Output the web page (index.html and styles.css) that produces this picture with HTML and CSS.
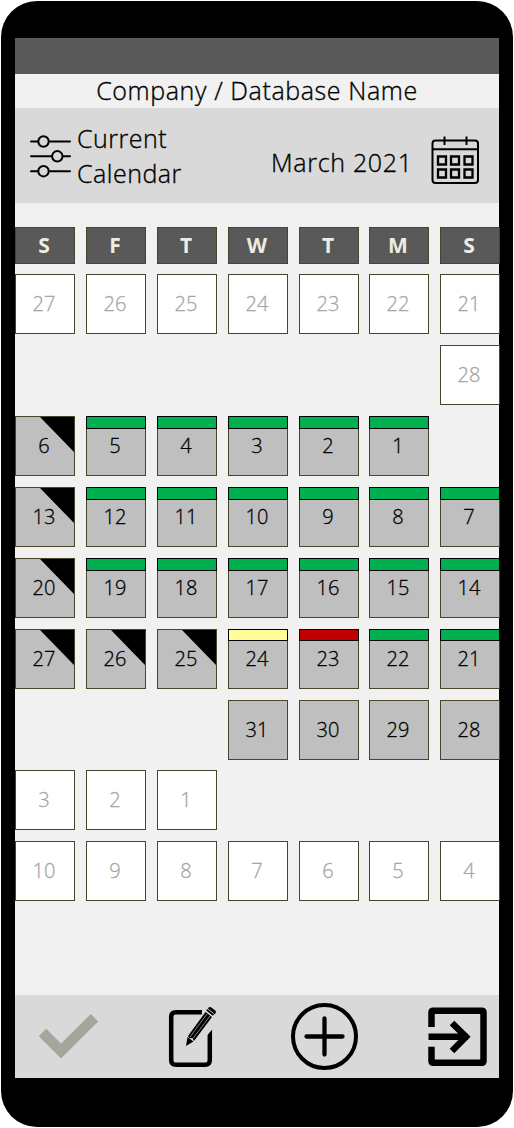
FILE: index.html
```html
<!DOCTYPE html>
<html lang="en">
<head>
<meta charset="utf-8">
<title>March 2021</title>
<link rel="stylesheet" href="styles.css">
</head>
<body>
<div class="phone">
  <main class="screen">
    <div class="status"></div>
    <h1 class="company"><span>Company / Database Name</span></h1>
    <header class="toolbar">
      <svg class="filters" width="42" height="44" viewBox="0 0 42 44" fill="none" stroke="#000" stroke-width="2" stroke-linecap="round">
        <path d="M1 7.500H8M20 7.500H40M1 22.300H21.500M33.500 22.300H40M1 37.200H8M20 37.200H40"/>
        <circle cx="13.500" cy="7.500" r="5.200"/><circle cx="27.300" cy="22.300" r="5.200"/><circle cx="13.500" cy="37.200" r="5.200"/>
      </svg>
      <div class="calendar-name"><span>Current</span><span>Calendar</span></div>
      <div class="month"><span>March 2021</span></div>
      <svg class="calendar-icon" width="49" height="49" viewBox="0 0 49 49" fill="none" stroke="#000" stroke-width="2">
        <rect x="1.500" y="4.500" width="45.500" height="42.500" rx="3"/>
        <path d="M1.500 13.300H47M13.500 .5V9M35.500 .5V9"/>
        <path d="M7 20.500h8v8H7zM20 20.500h8v8h-8zM33.500 20.500h8v8h-8zM7 33.500h8v8H7zM20 33.500h8v8h-8zM33.500 33.500h8v8h-8z" stroke-width="2.300"/>
      </svg>
    </header>
    <section class="calendar" id="calendar"></section>
    <footer class="actions">
      <svg width="484" height="83" viewBox="0 0 484 83">
        <path d="M27.500 37.500L46 56L79.500 22.800" fill="none" stroke="#a6a59b" stroke-width="10.500"/>
        <path d="M187 17.300H161Q156.200 17.300 156.200 22V65Q156.200 69.800 161 69.800H190Q194.800 69.800 194.800 65V35" fill="none" stroke="#000" stroke-width="4.500"/>
        <path d="M187 12L202 12V29L189 44Z" fill="#d9d9d9"/>
        <path d="M171 51L172.500 42L178.500 46.500Z" fill="#000"/>
        <path d="M173 41L190.500 17L197 22L179 46L177.500 43L174.500 43.300Z" fill="#000"/>
        <path d="M191.800 14.700L198.500 20" stroke="#000" stroke-width="2"/>
        <path d="M194 12L196 12.300L200.500 15.700L201 17.500L199.500 19.500L192.800 14Z" fill="#000"/>
        <path d="M192.600 13.700L199.300 19" stroke="#d9d9d9" stroke-width=".7"/>
        <path d="M175 42L192 19M178 43.500L195 21" stroke="#d9d9d9" stroke-width=".6"/>
        <g fill="none" stroke="#000"><circle cx="309.500" cy="41.500" r="31.500" stroke-width="4"/>
        <path d="M291.500 41.500H327.500M309.500 23.500V59.500" stroke-width="4.300" stroke-linecap="round"/></g>
        <path d="M416.500 32V17.500Q416.500 15.700 418.300 15.700H466.700Q468.500 15.700 468.500 17.500V66Q468.500 67.800 466.700 67.800H418.300Q416.500 67.800 416.500 66V51.700M413.500 41.800H453M437 28L451 41.800L437 56" fill="none" stroke="#000" stroke-width="6.500"/>
      </svg>
    </footer>
  </main>
</div>
<script src="calendar.js"></script>
</body>
</html>
```
FILE: styles.css
```css
*, *::after { box-sizing: border-box; }
body { margin: 0; padding: 1px; background: #fff; color: #000; font-family: "Open Sans", "Noto Sans", sans-serif; }
.phone { width: 512px; height: 1126px; padding: 37px 14px 49px; border-radius: 36px; background: #000; }
.screen { display: flex; flex-direction: column; width: 484px; height: 1040px; background: #f1f1f1; }
.status { flex: none; height: 36px; background: #595959; }
.company { flex: none; height: 34px; margin: 0; font-size: 25px; line-height: 33px; font-weight: 300; font-stretch: 88%; letter-spacing: .6px; white-space: nowrap; text-align: center; -webkit-text-stroke: .35px; }
.toolbar { flex: none; display: flex; height: 95px; padding-left: 15px; background: #d9d9d9; font-size: 25px; font-weight: 300; font-stretch: 88%; letter-spacing: .5px; -webkit-text-stroke: .35px; }
.filters { margin-top: 26px; flex: none; }
.calendar-name { display: flex; flex-direction: column; width: 170px; margin: 13px 0 0 5px; line-height: 35px; }
.calendar-name span, .month span { align-self: flex-start; white-space: nowrap; }
.month { display: flex; width: 160px; margin: 37px 0 0 24px; line-height: 35px; letter-spacing: .7px; }
.calendar-icon { flex: none; margin-top: 28px; }
.calendar { display: grid; grid-template-columns: 71px 71px 71px 71px 70px 71px 60px; grid-template-rows: 47px repeat(6, 71px) 70px 71px 60px; width: 485px; margin-top: 24px; }
.weekday, .day { position: relative; display: flex; justify-content: center; align-items: center; width: 60px; border: 1px solid #494529; }
.weekday { height: 37px; padding: 0 2px 2px 0; background: #595959; color: #eeece1; font-size: 21px; font-weight: 700; font-stretch: 92%; }
.day { height: 60px; padding: 0 2px 2px 0; background: #bfbfbf; font-size: 20px; font-weight: 300; font-stretch: 95%; letter-spacing: .2px; -webkit-text-stroke: .3px; }
.outside { background: #fff; color: #a6a6a6; }
.day.off::after { content: ""; position: absolute; top: 0; right: 0; width: 34px; height: 35px; background: #000; clip-path: polygon(0 0, 100% 0, 100% 100%); }
.done::after, .approved::after, .partial::after, .missing::after { content: ""; position: absolute; inset: -1px -1px auto; height: 13px; border: 1px solid #000; background: #00b050; }
.approved::after, .partial::after, .missing::after { height: 12px; }
.partial::after { background: #ff9; }
.missing::after { background: #c00000; }
.actions { height: 83px; margin-top: auto; background: #d9d9d9; }
.actions svg { display: block; }
```
FILE: calendar.js
```js
const rows = [
  ['27o', '26o', '25o', '24o', '23o', '22o', '21o'],
  ['', '', '', '', '', '', '28o'],
  ['6x', '5d', '4d', '3d', '2d', '1d', ''],
  ['13x', '12d', '11d', '10d', '9d', '8d', '7d'],
  ['20x', '19d', '18d', '17d', '16d', '15d', '14d'],
  ['27x', '26x', '25x', '24p', '23m', '22a', '21a'],
  ['', '', '', '31', '30', '29', '28'],
  ['3o', '2o', '1o', '', '', '', ''],
  ['10o', '9o', '8o', '7o', '6o', '5o', '4o']
];
const kinds = { o: 'outside', x: 'off', d: 'done', a: 'approved', p: 'partial', m: 'missing' };
const calendar = document.getElementById('calendar');
for (const letter of 'SFTWTMS') {
  const cell = document.createElement('div');
  cell.className = 'weekday';
  cell.textContent = letter;
  calendar.append(cell);
}
for (const entry of rows.flat()) {
  const cell = document.createElement('div');
  if (entry) {
    cell.className = 'day ' + (kinds[entry.slice(-1)] || '');
    cell.textContent = parseInt(entry, 10);
  }
  calendar.append(cell);
}
```
